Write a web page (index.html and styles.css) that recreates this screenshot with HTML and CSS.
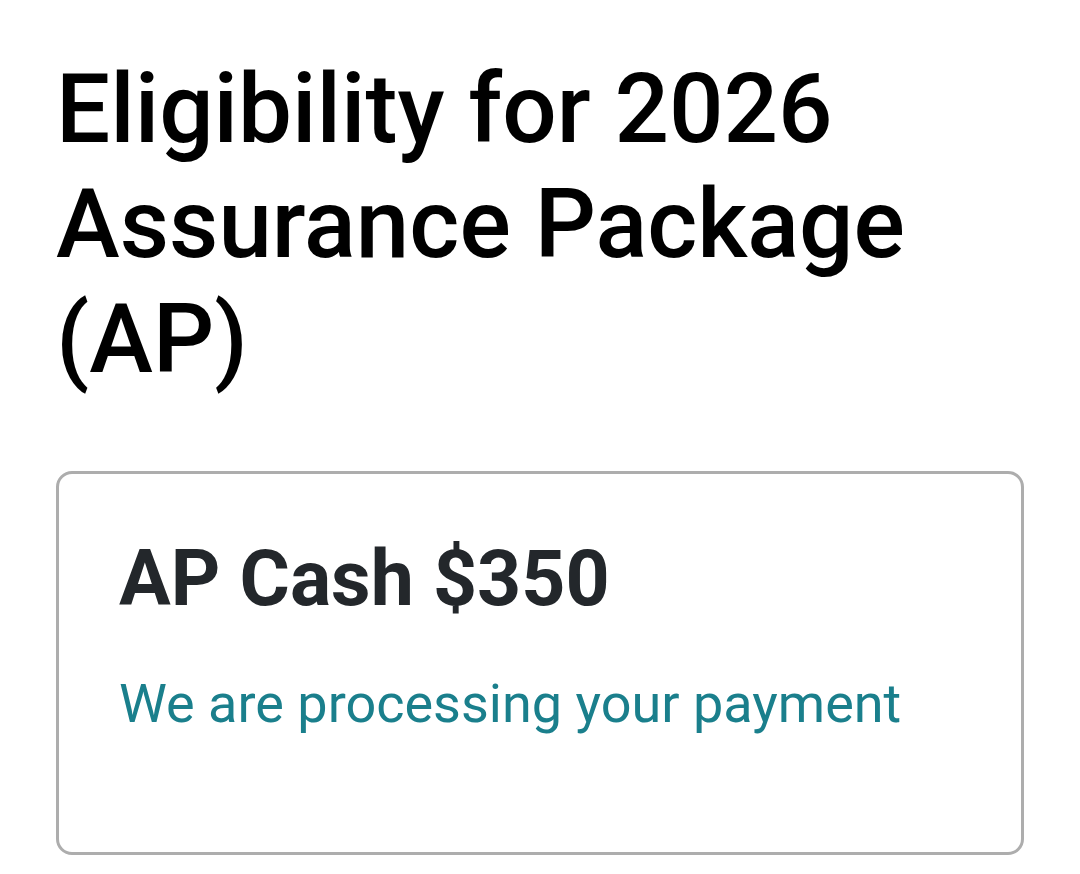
FILE: index.html
```html
<!DOCTYPE html>
<html lang="en">
<head>
<meta charset="utf-8">
<title>Eligibility for 2026 Assurance Package (AP)</title>
<link rel="stylesheet" href="styles.css">
</head>
<body>
<main class="page">
  <h1 class="page-title">Eligibility for 2026 Assurance Package (AP)</h1>
  <section class="card">
    <h2 class="card-title">AP Cash $350</h2>
    <p class="card-status">We are processing your payment</p>
  </section>
</main>
</body>
</html>
```
FILE: styles.css
```css
html, body {
  margin: 0;
  padding: 0;
  background: #ffffff;
}
body {
  font-family: Roboto, "Noto Sans", "Liberation Sans", sans-serif;
}
.page {
  padding: 52px 56px 0 56px;
}
.page-title {
  margin: 0;
  font-size: 96px;
  line-height: 115px;
  font-weight: 500;
  color: #000000;
  width: 900px;
}
.card {
  margin-top: 74px;
  border: 3px solid #adadad;
  border-radius: 16px;
  padding: 59px 60px 116px 60px;
  width: 968px;
  box-sizing: border-box;
}
.card-title {
  margin: 0;
  font-size: 77px;
  line-height: 92px;
  font-weight: 700;
  color: #23272b;
}
.card-status {
  margin: 46px 0 0 0;
  font-size: 54px;
  line-height: 65px;
  font-weight: 400;
  color: #1a7f8c;
  white-space: nowrap;
}
```
